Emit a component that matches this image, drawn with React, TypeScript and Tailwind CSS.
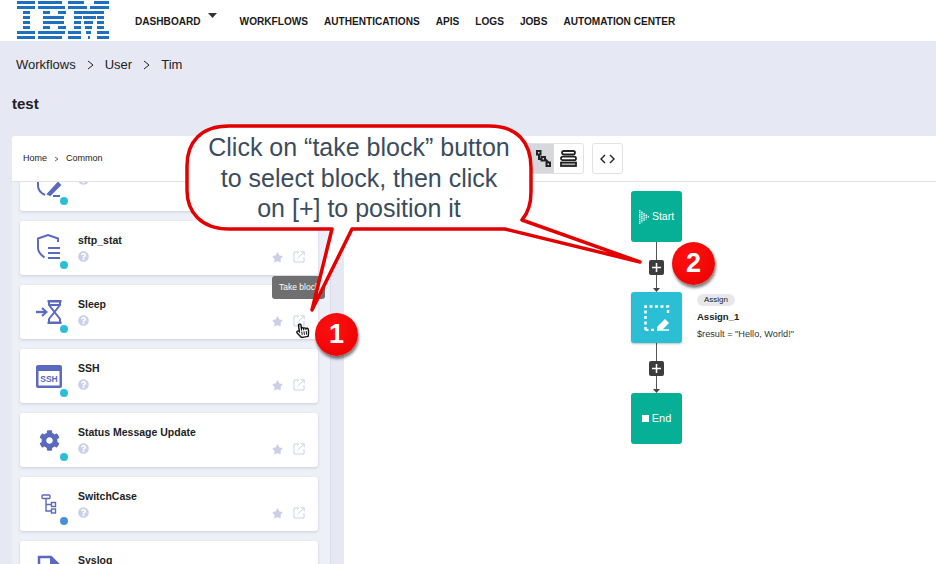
import React from "react";
import { FaStar, FaQuestionCircle, FaCog, FaRegHandPointer } from "react-icons/fa";

const B = "#5a6abf";

const LOGO: number[][][] = [
  [[0, 18], [21, 45], [51, 67], [77, 92]],
  [[0, 18], [21, 48], [51, 70], [73, 92]],
  [[6, 13], [26, 33], [41, 49], [57, 87]],
  [[6, 13], [26, 47], [57, 65], [66, 79], [80, 87]],
  [[6, 13], [26, 47], [57, 64], [67, 76], [80, 87]],
  [[6, 13], [26, 33], [41, 49], [57, 64], [68, 75], [80, 87]],
  [[0, 18], [21, 48], [51, 64], [69, 74], [80, 92]],
  [[0, 18], [21, 45], [51, 64], [71, 73], [80, 92]],
];

function IbmLogo() {
  return (
    <svg width="92" height="39" viewBox="0 0 92 39" className="mb-[2px] shrink-0">
      {LOGO.map((row, i) =>
        row.map(([a, b]) => <rect key={`${i}-${a}`} x={a} y={1 + i * 5} width={b - a} height={3} fill="#1f70c1" />)
      )}
    </svg>
  );
}

function TakeIcon({ className = "" }: { className?: string }) {
  return (
    <svg width="12" height="12" viewBox="0 0 12 12" fill="none" stroke="#c9cfe9" strokeWidth="1" className={className}>
      <path d="M6 1H1v10h10V6" />
      <path d="M4.500 7.500 11 1M7.500 .8h3.700v3.700" />
    </svg>
  );
}

function SftpIcon() {
  return (
    <svg width="26" height="28" viewBox="0 0 26 28" fill="none" stroke={B} strokeWidth="2">
      <path d="M22 8V4.500L12 1 2 4.500V14c0 4 3 7 6.500 9.500" />
      <path d="M12 14h12M12 19h12M12 24h12" />
    </svg>
  );
}
function AssignIcon() {
  return (
    <svg width="26" height="28" viewBox="0 0 26 28" fill="none" stroke={B} strokeWidth="2">
      <path d="M2 6v10c0 4 3 7 7 9" />
      <path d="M12 24 22 13l2 2-10 10z" fill={B} />
      <path d="M17 26h7" />
    </svg>
  );
}
function SleepIcon() {
  return (
    <svg width="26" height="24" viewBox="0 0 26 24" fill="none" stroke={B} strokeWidth="2.400">
      <path d="M0 12h9" />
      <path d="M6 8l4.500 4L6 16" strokeWidth="2" />
      <path d="M11.500 1.200h14M11.500 22.800h14" />
      <path d="M13 1.200V5l5.500 7L13 19v3.800M24 1.200V5l-5.500 7 5.500 7v3.800" strokeWidth="2" />
      <path d="M13 5h11" strokeWidth="2" />
    </svg>
  );
}
function SshIcon() {
  return (
    <svg width="26" height="23" viewBox="0 0 26 23">
      <rect x="0" y="0" width="26" height="23" rx="2" fill={B} />
      <rect x="2.500" y="6" width="21" height="14.500" fill="#fff" />
      <text x="13" y="16.500" textAnchor="middle" fontSize="8.500" fontWeight="700" fill={B} fontFamily="Liberation Sans, sans-serif">SSH</text>
    </svg>
  );
}
function SwitchIcon() {
  return (
    <svg width="16" height="21" viewBox="0 0 16 21" fill="none" stroke={B} strokeWidth="1.400">
      <rect x="1" y="1" width="8" height="3.500" rx="1" />
      <path d="M5 4.500V17h5M5 10.500h5" />
      <rect x="10.500" y="8.500" width="4" height="4" />
      <rect x="10.500" y="15" width="4" height="4" />
    </svg>
  );
}
function SyslogIcon() {
  return (
    <svg width="24" height="26" viewBox="0 0 24 26" fill="none" stroke={B} strokeWidth="2.500">
      <path d="M2 26V2h12l8 8v16" />
      <path d="M13 1v9h10z" fill={B} stroke="none" />
    </svg>
  );
}

type Block = { name: string; icon: React.ReactNode; dot: string; h: string; actions?: boolean };

function BlockCard({ name, icon, dot, h, actions = true }: Block) {
  return (
    <div className={`relative flex shrink-0 rounded-[3px] bg-white shadow-[0_1px_3px_rgba(60,70,120,0.2)] ${h}`}>
      <div className="relative flex w-[58px] shrink-0 items-center justify-center">
        {icon}
        <span className={`absolute left-[40px] top-[40px] h-[8px] w-[8px] rounded-full ${dot}`} />
      </div>
      <div className="flex flex-col pt-[13px]">
        <span className="text-[10.500px] leading-[13px] font-bold text-[#222]">{name}</span>
        <FaQuestionCircle className="mt-[4px] text-[#ccd1ea]" size={11} />
      </div>
      {actions && (
        <div className="absolute right-[13px] bottom-[12px] flex items-center gap-[10px]">
          <FaStar className="text-[#c9cfe9]" size={11} />
          <TakeIcon />
        </div>
      )}
    </div>
  );
}

function Connector() {
  return (
    <div className="flex h-[50px] w-[51px] flex-col items-center">
      <div className="h-[18px] w-px bg-[#555]" />
      <div className="flex h-[15px] w-[15px] shrink-0 items-center justify-center rounded-[2px] bg-[#3d3d3d]">
        <svg width="9" height="9" viewBox="0 0 9 9" stroke="#fff" strokeWidth="1.500">
          <path d="M4.500 0v9M0 4.500h9" />
        </svg>
      </div>
      <div className="h-[13px] w-px bg-[#555]" />
      <svg width="7" height="4" viewBox="0 0 7 4" className="shrink-0">
        <path d="M0 0h7L3.500 4z" fill="#444" />
      </svg>
    </div>
  );
}

function StartGlyph() {
  const cols = [
    [0, 14],
    [2.200, 11],
    [4.400, 8],
    [6.600, 5],
    [8.800, 2],
  ];
  return (
    <svg width="10" height="14" viewBox="0 0 10 14" fill="none" stroke="#fff" strokeOpacity="0.9" strokeWidth="1.500" strokeDasharray="1.500 0.600">
      {cols.map(([x, h]) => (
        <path key={x} d={`M${x + 0.7} ${(14 - h) / 2}v${h}`} />
      ))}
    </svg>
  );
}

function Callout() {
  const badge =
    "absolute flex h-[43px] w-[43px] items-center justify-center rounded-full bg-[radial-gradient(circle_at_40%_35%,#ff1010,#e80000)] text-[27px] font-bold text-white shadow-[1px_3px_3px_rgba(0,0,0,0.5)]";
  return (
    <div className="pointer-events-none absolute left-0 top-0 h-[564px] w-[936px]">
      <svg width="936" height="564" className="absolute left-0 top-0">
        <path
          d="M229 126H489C517 126 531 142 531 168V192C531 204 528 213 522 220L640 262L505 229H352L312 310L332 229H229C201 229 187 212 187 190V166C187 142 201 126 229 126Z"
          fill="#fff"
          stroke="#e30000"
          strokeWidth="3.500"
          strokeLinejoin="round"
        />
      </svg>
      <div className="absolute left-[187px] top-[132px] w-[344px] text-center text-[25px] leading-[30.500px] text-[#3b4c5c]">
        Click on “take block” button
        <br />
        to select block, then click
        <br />
        on [+] to position it
      </div>
      <div className={`${badge} left-[315px] top-[313px]`}>1</div>
      <div className={`${badge} left-[672px] top-[242px]`}>2</div>
    </div>
  );
}

export default function App() {
  const nav = ["WORKFLOWS", "AUTHENTICATIONS", "APIS", "LOGS", "JOBS", "AUTOMATION CENTER"];
  return (
    <div className="relative h-[564px] w-[936px] overflow-hidden bg-[#e6e8f4] font-['Liberation_Sans',Arial,sans-serif]">
      <header className="flex h-[41px] items-center bg-white pl-[17px]">
        <IbmLogo />
        <nav className="ml-[26px] mt-[2px] flex items-center gap-[16px] text-[10.100px] font-bold text-[#1a1a1a]">
          <span className="relative mr-[23px]">
            DASHBOARD
            <svg width="9" height="5" viewBox="0 0 9 5" className="absolute left-[73px] top-[-1px]">
              <path d="M0 0h9L4.500 5z" fill="#333" />
            </svg>
          </span>
          {nav.map((n) => (
            <span key={n}>{n}</span>
          ))}
        </nav>
      </header>

      <div className="flex h-[46px] items-center pl-[16px] pt-[1px] text-[13px] text-[#222]">
        <span>Workflows</span>
        <svg width="7" height="10" viewBox="0 0 7 10" fill="none" stroke="#222" className="mx-[11px]"><path d="M1 1l5 4-5 4" /></svg>
        <span>User</span>
        <svg width="7" height="10" viewBox="0 0 7 10" fill="none" stroke="#222" className="mx-[11px]"><path d="M1 1l5 4-5 4" /></svg>
        <span>Tim</span>
      </div>

      <h1 className="pl-[12px] pt-[8px] text-[15px] leading-[18px] font-bold text-[#222]">test</h1>

      <div className="ml-[12px] mt-[23px] flex h-[428px] flex-col rounded-tl-[3px] bg-white">
        <div className="flex h-[46px] shrink-0 items-center border-b border-[#e2e2e2] pl-[11px]">
          <span className="text-[9px] text-[#222]">Home</span>
          <svg width="5" height="6" viewBox="0 0 5 6" fill="none" stroke="#444" strokeWidth="0.800" className="mx-[7px]"><path d="M1 1l3 2-3 2" /></svg>
          <span className="text-[9px] text-[#222]">Common</span>
          <div className="ml-[421px] flex h-[31px] w-[60px] overflow-hidden rounded-[3px] border border-[#e2e2e2]">
            <div className="flex flex-1 items-center justify-center bg-[#d6d8db]">
              <svg width="15" height="18" viewBox="0 0 15 18" fill="none" stroke="#222" strokeWidth="2" className="ml-[9px]">
                <rect x="1" y="1" width="3.500" height="3.500" />
                <rect x="5.500" y="7" width="3.500" height="3.500" />
                <rect x="10.500" y="12.500" width="3.500" height="3.500" />
                <path d="M3 4.500V9h2.500M9 9l3.500 3.500" />
              </svg>
            </div>
            <div className="flex flex-1 items-center justify-center">
              <svg width="17" height="17" viewBox="0 0 17 17" fill="none" stroke="#222" strokeWidth="1.800">
                <rect x="2" y="1" width="13" height="3.500" rx="1.700" />
                <rect x="1" y="12.500" width="15" height="3.500" fill="#aaa" />
                <rect x="1" y="6.700" width="15" height="3.500" rx="1.700" />
              </svg>
            </div>
          </div>
          <div className="ml-[8px] flex h-[31px] w-[31px] items-center justify-center rounded-[3px] border border-[#e2e2e2]">
            <svg width="15" height="10" viewBox="0 0 15 10" fill="none" stroke="#222" strokeWidth="1.400">
              <path d="M5 1 1 5l4 4M10 1l4 4-4 4" />
            </svg>
          </div>
        </div>

        <div className="flex min-h-0 flex-1">
          <div className="flex w-[319px] shrink-0 flex-col gap-[10px] overflow-hidden border-r border-[#d8dbe8] bg-[#eef0f8] pl-[8px] pr-[12px]">
            <BlockCard name="" icon={<AssignIcon />} dot="bg-[#29c0d6]" h="h-[54px] -mt-[25px]" actions={false} />
            <BlockCard name="sftp_stat" icon={<SftpIcon />} dot="bg-[#29c0d6]" h="h-[54px]" />
            <BlockCard name="Sleep" icon={<SleepIcon />} dot="bg-[#29c0d6]" h="h-[54px]" />
            <BlockCard name="SSH" icon={<SshIcon />} dot="bg-[#29c0d6]" h="h-[54px]" />
            <BlockCard name="Status Message Update" icon={<FaCog color={B} size={21} />} dot="bg-[#29c0d6]" h="h-[54px]" />
            <BlockCard name="SwitchCase" icon={<SwitchIcon />} dot="bg-[#4a90d9]" h="h-[54px]" />
            <BlockCard name="Syslog" icon={<SyslogIcon />} dot="bg-[#29c0d6]" h="h-[54px]" />
          </div>
          <div className="w-[13px] shrink-0 bg-[#e6e8f4]" />
          <div className="relative flex-1 pl-[287px] pt-[9px]">
            <div className="flex w-[51px] flex-col items-center">
              <div className="flex h-[51px] w-[51px] items-center justify-center gap-[3px] rounded-[3px] bg-[#05b096] text-[10.500px] text-white">
                <StartGlyph />
                Start
              </div>
              <Connector />
              <div className="relative flex h-[51px] w-[51px] items-center justify-center rounded-[3px] bg-[#2abfd5] shadow-[0_1px_2px_rgba(0,0,0,0.25)]">
                <svg width="26" height="26" viewBox="0 0 26 26" fill="none" stroke="#fff" strokeWidth="2.500">
                  <path d="M1.500 25V1.500H24V10" strokeDasharray="3 2.500" />
                  <path d="M1.500 25h9" strokeDasharray="3 2.500" />
                  <path d="M14 22 21 15l3 3-6 6h-4zM13 25h12" strokeWidth="1.500" fill="#fff" />
                </svg>
                <div className="absolute left-[66px] top-[2px] flex flex-col items-start">
                  <span className="rounded-full bg-[#e7e8ec] px-[7px] py-px text-[8px] leading-[10px] text-[#222]">Assign</span>
                  <span className="mt-[5px] whitespace-nowrap text-[9.500px] leading-[12px] font-bold text-[#222]">Assign_1</span>
                  <span className="mt-[6px] whitespace-nowrap text-[9.200px] leading-[11px] text-[#333]">$result = "Hello, World!"</span>
                </div>
              </div>
              <Connector />
              <div className="flex h-[51px] w-[51px] items-center justify-center gap-[3px] rounded-[3px] bg-[#05b096] text-[11px] text-white">
                <span className="h-[7px] w-[7px] bg-white" />
                End
              </div>
            </div>
          </div>
        </div>
      </div>

      <div className="absolute left-[272px] top-[276px] flex h-[23px] w-[53px] items-center overflow-hidden rounded-[3px] bg-[#6f6f6f] pl-[7px] text-[8.500px] whitespace-nowrap text-white">
        Take block
      </div>
      <FaRegHandPointer className="absolute left-[295px] top-[323px] rotate-[-8deg] text-[#111]" size={15} />
      <Callout />
    </div>
  );
}
